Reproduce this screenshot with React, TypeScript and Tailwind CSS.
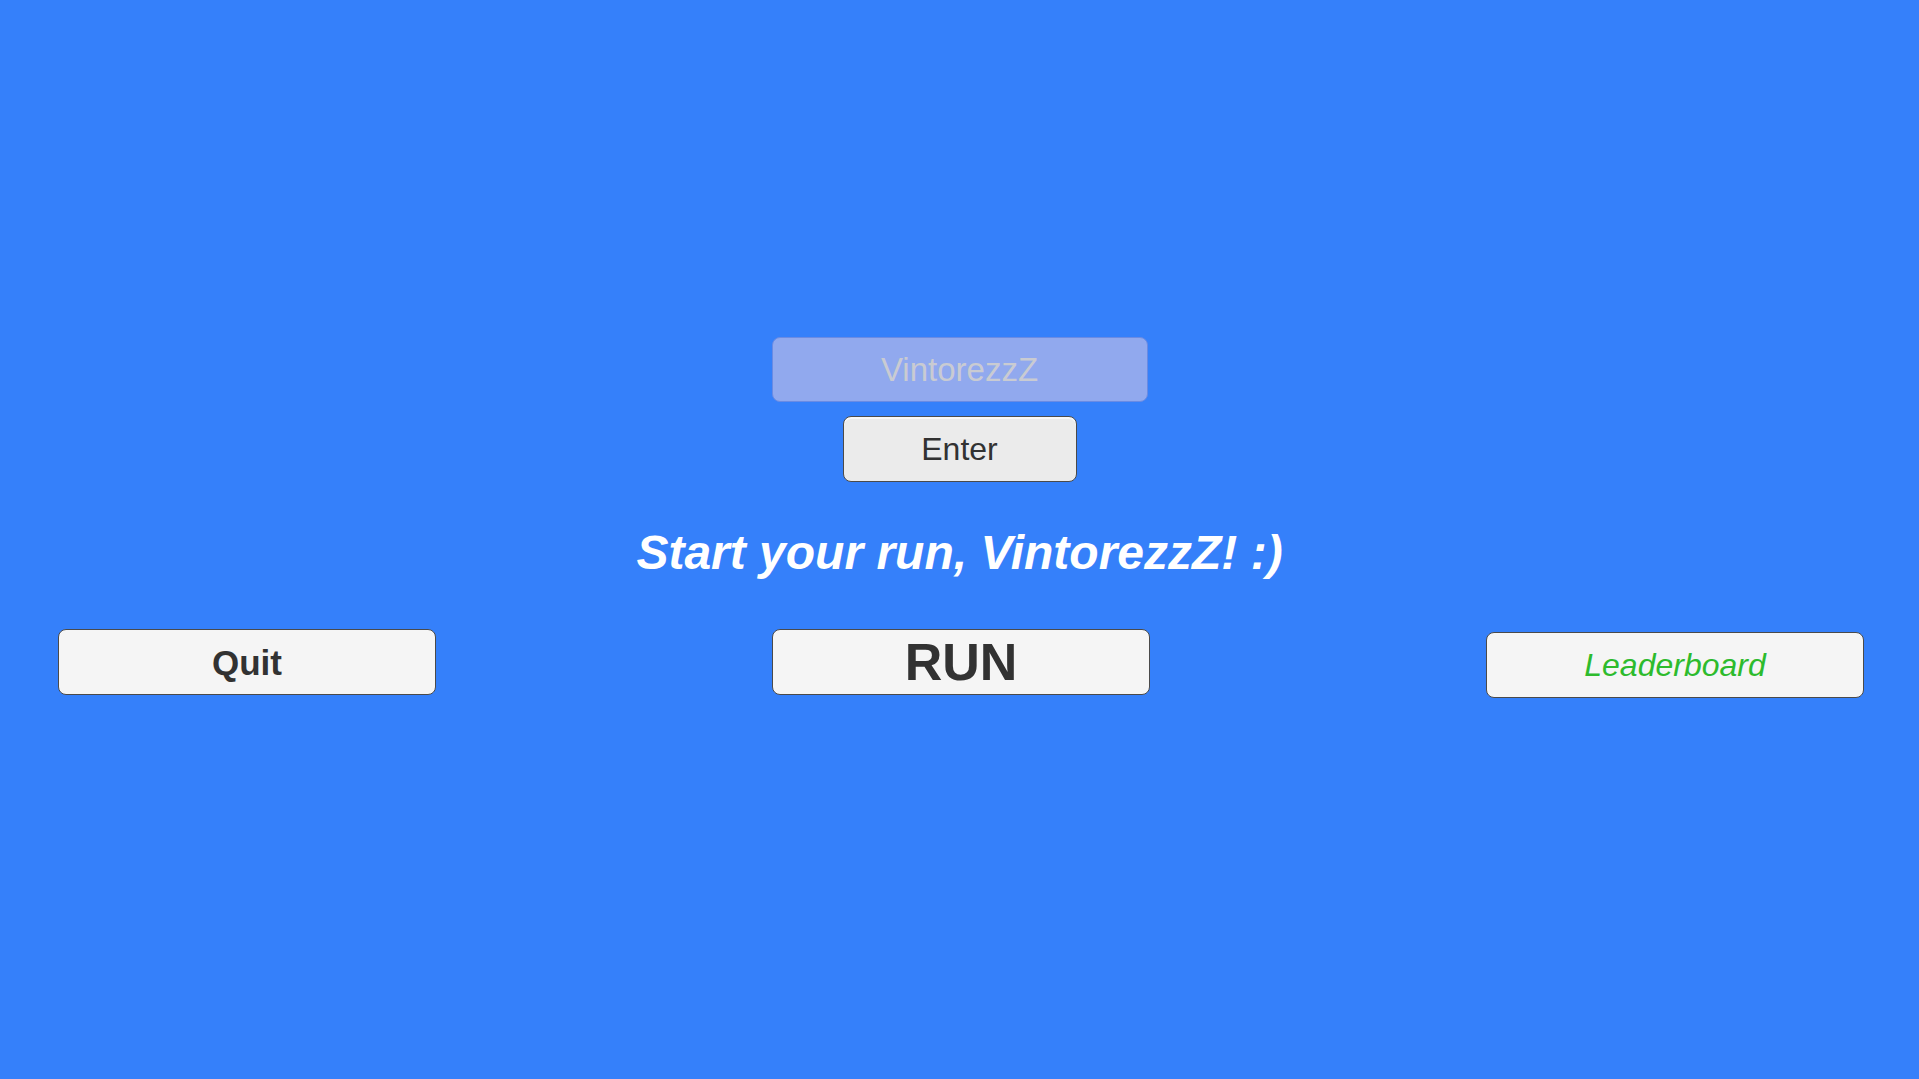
const font = "font-['Liberation_Sans',Arial,sans-serif]";

function MenuButton({
  children,
  className = "",
}: {
  children: React.ReactNode;
  className?: string;
}) {
  return (
    <button
      className={`flex h-[66px] w-[378px] items-center justify-center rounded-[8px] border border-[#4a4a4a] bg-[#f5f5f5] ${className}`}
    >
      {children}
    </button>
  );
}

export default function App() {
  return (
    <div className={`flex h-[1079px] w-full flex-col items-center bg-[#3580fa] pt-[337px] ${font}`}>
      <div className="flex h-[65px] w-[376px] items-center justify-center rounded-[8px] border border-[#6a8be3] bg-[#91a9ee]">
        <span className="text-[33px] leading-none text-[#c9cbd2]">VintorezzZ</span>
      </div>
      <button className="mt-[14px] flex h-[66px] w-[234px] items-center justify-center rounded-[8px] border border-[#4a4a4a] bg-[#ebebeb] shadow-[inset_0_2px_0_#f8f8f8]">
        <span className="text-[32px] leading-none text-[#323232]">Enter</span>
      </button>
      <h1 className="mt-[48px] h-[46px] text-[48px] font-bold italic leading-[46px] text-white">
        Start your run, VintorezzZ! :)
      </h1>
      <div className="mt-[53px] flex w-full items-start justify-between pl-[58px] pr-[55px]">
        <MenuButton>
          <span className="text-[35px] font-bold leading-none text-[#323232]">Quit</span>
        </MenuButton>
        <MenuButton>
          <span className="text-[52px] font-bold leading-none text-[#323232]">RUN</span>
        </MenuButton>
        <MenuButton className="mt-[3px]">
          <span className="text-[32px] italic leading-none text-[#2dbb2d]">Leaderboard</span>
        </MenuButton>
      </div>
    </div>
  );
}
